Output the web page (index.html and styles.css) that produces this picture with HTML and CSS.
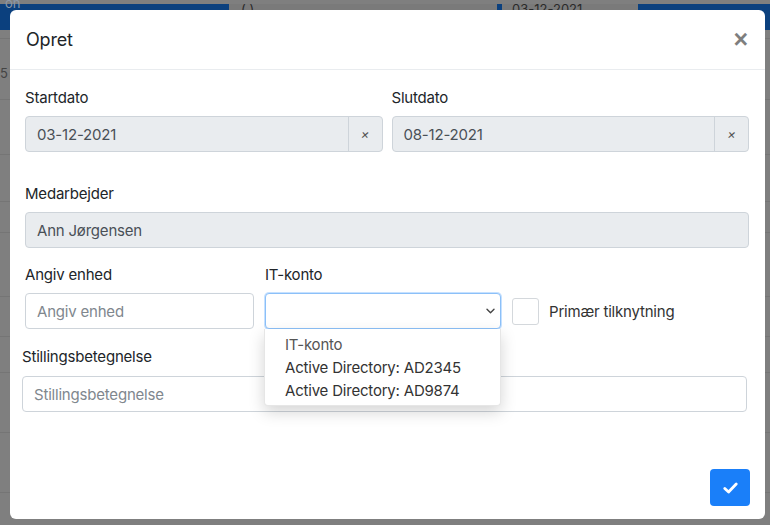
FILE: index.html
```html
<!DOCTYPE html>
<html lang="da">
<head>
<meta charset="utf-8">
<title>Opret</title>
<link rel="stylesheet" href="styles.css">
</head>
<body>
<div class="page">
  <div class="navbar">
    <span class="brand">on</span>
    <div class="nav-field nf1">( )</div>
    <div class="nav-field nf2">03-12-2021</div>
  </div>
  <div class="table">
    <div class="trow h9"></div>
    <div class="trow h61"><span class="cellnum">5</span></div>
    <div class="trow h55"></div>
    <div class="trow h47"></div>
    <div class="trow h31"></div>
    <div class="trow h64"></div>
    <div class="trow h40"></div>
    <div class="trow h36"></div>
    <div class="trow h60"></div>
    <div class="trow h60"></div>
  </div>

  <div class="modal">
    <div class="modal-header">
      <h5 class="modal-title">Opret</h5>
      <span class="close">×</span>
    </div>
    <div class="modal-body">
      <div class="date-row">
        <div class="group">
          <label class="label">Startdato</label>
          <div class="input-group disabled">
            <span class="value">03-12-2021</span>
            <span class="clear">×</span>
          </div>
        </div>
        <div class="group">
          <label class="label">Slutdato</label>
          <div class="input-group disabled">
            <span class="value">08-12-2021</span>
            <span class="clear">×</span>
          </div>
        </div>
      </div>

      <div class="group g-emp">
        <label class="label">Medarbejder</label>
        <div class="input disabled"><span class="value">Ann Jørgensen</span></div>
      </div>

      <div class="unit-row">
        <div class="group col-unit">
          <label class="label">Angiv enhed</label>
          <div class="input"><span class="placeholder">Angiv enhed</span></div>
        </div>
        <div class="group col-it">
          <label class="label">IT-konto</label>
          <div class="select-wrap">
            <div class="select">
              <svg class="chevron" width="9" height="6" viewBox="0 0 9 6"><path d="M1 1.2 L4.5 4.7 L8 1.2" fill="none" stroke="#444" stroke-width="1.4" stroke-linecap="round" stroke-linejoin="round"/></svg>
            </div>
            <ul class="dropdown">
              <li class="opt opt-muted">IT-konto</li>
              <li class="opt">Active Directory: AD2345</li>
              <li class="opt">Active Directory: AD9874</li>
            </ul>
          </div>
        </div>
        <div class="check-wrap">
          <span class="checkbox"></span>
          <span class="check-label">Primær tilknytning</span>
        </div>
      </div>

      <div class="group g-title">
        <label class="label">Stillingsbetegnelse</label>
        <div class="input"><span class="placeholder">Stillingsbetegnelse</span></div>
      </div>
    </div>
    <div class="modal-footer">
      <button class="btn-primary" type="button">
        <svg width="15" height="12" viewBox="0 0 15 12"><path d="M1.8 6.4 L5.6 10 L13.2 2" fill="none" stroke="#fff" stroke-width="2.8" stroke-linecap="round" stroke-linejoin="round"/></svg>
      </button>
    </div>
  </div>
</div>
</body>
</html>
```
FILE: styles.css
```css
* { box-sizing: border-box; }
html, body { margin: 0; padding: 0; }
body {
  font-family: Inter, "Liberation Sans", Arial, sans-serif;
  background: #7f7f7f;
}
.page {
  position: relative;
  width: 770px;
  height: 525px;
  overflow: hidden;
  background: #7f7f7f;
  padding-top: 4px;
}
.navbar {
  height: 26px;
  background: #0b407e;
  display: flex;
  align-items: flex-start;
}
.brand {
  width: 229px;
  margin-top: -7px;
  padding-left: 5px;
  font-size: 13px;
  line-height: 13px;
  color: #8d98a8;
}
.nav-field {
  height: 22px;
  background: #7a7a7a;
  color: #2a2a2a;
  font-size: 13px;
  line-height: 10px;
  padding-left: 12px;
}
.nf1 { width: 268px; }
.nf2 { width: 136px; margin-left: 5px; padding-left: 10px; }
.table { display: flex; flex-direction: column; }
.trow { border-bottom: 1px solid #757575; position: relative; }
.h9 { height: 9px; }
.h61 { height: 61px; }
.h55 { height: 55px; }
.h47 { height: 47px; }
.h31 { height: 31px; }
.h64 { height: 64px; }
.h40 { height: 40px; }
.h36 { height: 36px; }
.h60 { height: 60px; }
.cellnum {
  display: block;
  margin-top: 26px;
  margin-left: 0;
  font-size: 13px;
  color: #444;
}

.modal {
  position: absolute;
  left: 10px;
  top: 10px;
  width: 755px;
  height: 509px;
  background: #fff;
  border-radius: 6px;
  display: flex;
  flex-direction: column;
  color: #212529;
  letter-spacing: -0.2px;
}
.modal-header {
  height: 60px;
  display: flex;
  align-items: center;
  justify-content: space-between;
  padding: 0 17px 0 16px;
  border-bottom: 1px solid #e9ecef;
}
.modal-title {
  margin: 0;
  font-size: 18px;
  font-weight: 400;
  line-height: 27px;
  color: #212529;
}
.close {
  font-family: "Liberation Sans", Arial, sans-serif;
  font-size: 25px;
  font-weight: 700;
  line-height: 26px;
  color: #000;
  opacity: .5;
  margin-top: -2px;
}
.modal-body {
  flex: 1;
  padding: 16px 16px 0 15px;
}
.label {
  display: block;
  font-size: 15px;
  line-height: 24px;
  margin-bottom: 6px;
  color: #212529;
}
.date-row {
  display: grid;
  grid-template-columns: 1fr 1fr;
  gap: 9px;
  margin-bottom: 30px;
}
.input-group, .input, .select {
  height: 36px;
  border: 1px solid #ced4da;
  border-radius: 4px;
  display: flex;
  align-items: center;
  font-size: 15px;
  background: #fff;
}
.disabled { background: #e9ecef; }
.value {
  flex: 1;
  padding-left: 11px;
  color: #495057;
}
.placeholder {
  padding-left: 11px;
  color: #80878e;
}
.clear {
  width: 34px;
  height: 100%;
  border-left: 1px solid #ced4da;
  display: flex;
  align-items: center;
  justify-content: center;
  font-size: 13px;
  color: #555;
  font-style: italic;
}
.g-emp { margin-bottom: 15px; }
.unit-row {
  display: flex;
  align-items: flex-end;
  gap: 11px;
  margin-bottom: 16px;
}
.col-unit { width: 229px; }
.col-it { width: 236px; }
.select-wrap { position: relative; }
.select {
  border-color: #8cc0f8;
  box-shadow: 0 0 0 1px rgba(128, 189, 255, .45);
  justify-content: flex-end;
  padding-right: 5px;
}
.dropdown {
  position: absolute;
  top: 100%;
  left: -1px;
  width: 237px;
  margin: 0;
  padding: 4px 0 3px;
  list-style: none;
  background: #fff;
  border: 1px solid #e6e6e6;
  border-top: 0;
  border-radius: 0 0 4px 4px;
  box-shadow: 0 6px 16px rgba(0, 0, 0, .17);
  z-index: 5;
}
.opt {
  padding-left: 20px;
  font-size: 15px;
  line-height: 23px;
  color: #333;
}
.opt-muted { color: #555; }
.check-wrap {
  height: 36px;
  display: flex;
  align-items: center;
  gap: 10px;
}
.checkbox {
  width: 27px;
  height: 27px;
  border: 1px solid #d4d8dc;
  border-radius: 3px;
  background: #fff;
}
.check-label {
  font-size: 15px;
  color: #333;
}
.g-title {
  margin-left: -3px;
  margin-right: 2px;
}
.g-title .label { margin-bottom: 7px; }
.modal-footer {
  display: flex;
  justify-content: flex-end;
  padding: 0 15px 13px 0;
}
.btn-primary {
  width: 40px;
  height: 37px;
  border: 0;
  border-radius: 4px;
  background: #1a7ff9;
  display: flex;
  align-items: center;
  justify-content: center;
  padding: 0;
}
```
